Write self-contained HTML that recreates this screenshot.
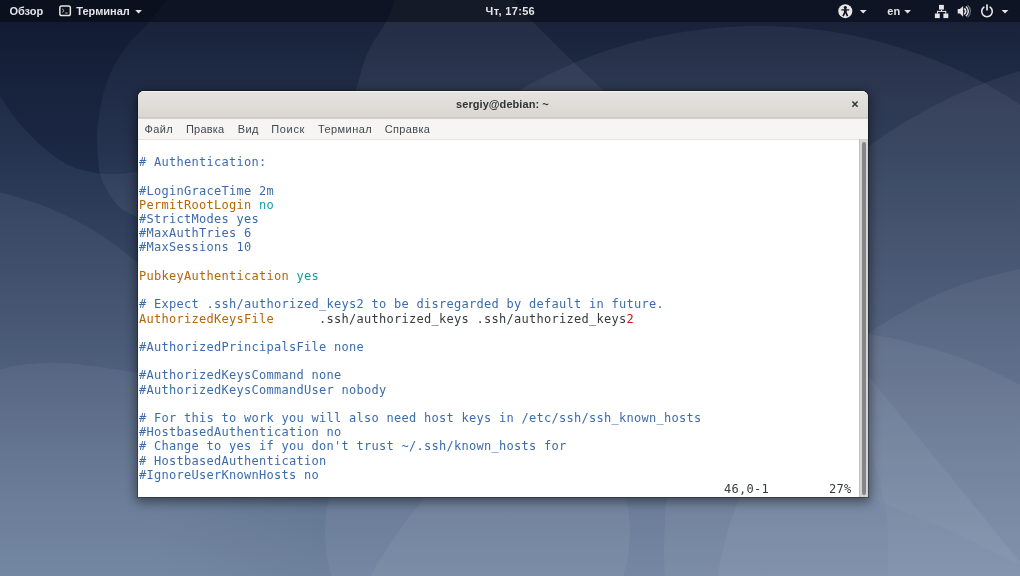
<!DOCTYPE html>
<html lang="ru"><head><meta charset="utf-8"><title>sergiy@debian: ~</title>
<style>
html,body{margin:0;padding:0}
body{width:1020px;height:576px;overflow:hidden;position:relative;background:#4a5878;font-family:"Liberation Sans",sans-serif}
#bg{position:absolute;left:0;top:0;width:1020px;height:576px}
#topbar{will-change:transform;position:absolute;left:0;top:0;width:1020px;height:22px;background:rgba(4,6,12,.5);color:#e6e6e6;font:bold 11px "Liberation Sans",sans-serif}
#topbar svg{position:absolute}
#win{will-change:transform;position:absolute;left:138px;top:91px;width:730px;height:406px;border-radius:6px 6px 0 0;box-shadow:0 0 0 1px rgba(0,0,0,.28),0 3px 11px 2px rgba(0,0,0,.45);background:#fff;overflow:hidden}
#title{position:absolute;left:0;top:0;width:730px;height:27px;background:linear-gradient(#e6e3e0,#dad7d2);border-bottom:1px solid #cdc9c4;box-sizing:border-box;box-shadow:inset 0 1px rgba(255,255,255,.6)}
#menu{position:absolute;left:0;top:27px;width:730px;height:22px;background:#f6f5f4;border-bottom:1px solid #e4e2df;box-sizing:border-box;box-shadow:inset 0 1px #d6d3ce;font:11px "Liberation Sans",sans-serif;color:#4a4f50}
#term{position:absolute;left:1px;top:50px;width:720px;height:357px;background:#fff;font:12px "DejaVu Sans Mono","Liberation Mono",monospace;letter-spacing:0.2754px;color:#2e3436;will-change:transform}
.ln{position:absolute;left:0;height:14.25px;line-height:14.25px;white-space:pre}
.c{color:#3c6cab}.k{color:#b5650a}.y{color:#129c9e}.r{color:#d01010}.n{color:#363b3d}
#sb{position:absolute;left:721px;top:48px;width:9px;height:358px;background:#d6d4d1;border-left:1px solid #c4c1bd;box-sizing:border-box}
#sb i{position:absolute;left:2px;top:3px;width:4px;height:352.5px;border-radius:2px;background:#82868a}
</style></head><body>
<svg id="bg" viewBox="0 0 1020 576">
<defs>
<linearGradient id="g" x1="0" y1="0" x2="0" y2="1"><stop offset="0.0382" stop-color="#19223a"/><stop offset="0.0868" stop-color="#1b263f"/><stop offset="0.1736" stop-color="#212d48"/><stop offset="0.2604" stop-color="#25334f"/><stop offset="0.3472" stop-color="#2c3c58"/><stop offset="0.4340" stop-color="#334360"/><stop offset="0.5208" stop-color="#3a4b68"/><stop offset="0.6076" stop-color="#415371"/><stop offset="0.6944" stop-color="#4a5c79"/><stop offset="0.7812" stop-color="#536683"/><stop offset="0.8681" stop-color="#5b6f8c"/><stop offset="1.0000" stop-color="#667b97"/></linearGradient>
<linearGradient id="gi" gradientUnits="userSpaceOnUse" x1="0" y1="0" x2="1020" y2="0"><stop offset="0" stop-color="#e6eeff" stop-opacity="0.058"/><stop offset="0.147" stop-color="#e6eeff" stop-opacity="0.058"/><stop offset="0.320" stop-color="#e6eeff" stop-opacity="0"/></linearGradient>
</defs>
<rect width="1020" height="576" fill="url(#g)"/>
<path d="M177.0 -12.0C175.3 -10.0 171.4 -5.6 166.8 0.0 C162.2 5.6 155.2 15.0 149.4 21.7 C143.6 28.4 137.3 33.6 132.0 40.0 C126.7 46.4 121.3 53.3 117.3 60.0 C113.3 66.7 110.3 73.3 107.8 80.0 C105.2 86.7 103.8 91.3 102.0 100.0 C100.2 108.7 97.8 121.1 97.2 132.0 C96.6 142.9 98.1 158.6 98.6 165.5 C99.1 172.4 99.8 172.1 100.0 173.4 C99.5 173.4 102.1 174.6 97.0 173.3 C91.9 172.0 78.6 170.2 69.4 165.6 C60.2 161.0 50.5 153.7 41.7 146.0 C32.9 138.3 23.6 128.0 16.7 119.7 C9.8 111.4 4.8 103.3 0.0 96.0 C-4.8 88.7 -10.0 79.3 -12.0 76.0L-12.0 -12.0Z" fill="#000820" fill-opacity="0.25"/>
<path d="M-30.0 187.2C-26.3 187.8 -15.1 189.4 -7.8 190.9 C-0.4 192.4 6.9 194.1 14.1 196.2 C21.3 198.2 28.5 200.5 35.6 203.0 C42.6 205.5 49.6 208.3 56.5 211.3 C63.3 214.3 70.1 217.6 76.8 221.1 C83.4 224.6 89.9 228.4 96.3 232.3 C102.6 236.3 108.9 240.5 115.0 244.9 C121.0 249.3 127.0 253.9 132.7 258.8 C138.4 263.6 144.0 268.6 149.4 273.9 C154.8 279.1 162.4 287.4 165.0 290.1L165 490L340 490L340 600L-30 600Z" fill="url(#gi)"/>
<g fill="#e6eeff" fill-opacity="0.058">
<path d="M100.0 173.4C100.9 175.8 102.4 182.2 105.6 187.8 C108.8 193.4 113.8 202.0 119.4 207.0 C125.0 212.0 133.1 215.3 139.0 218.0 C144.9 220.7 152.3 222.2 155.0 223.0L155.0 168.0C152.5 168.5 145.9 170.0 140.0 171.0 C134.1 172.0 126.1 173.5 119.4 173.9 C112.7 174.3 103.2 173.5 100.0 173.4Z"/>
<path d="M401.0 -12.0C400.0 -10.0 397.5 -5.7 395.0 0.0 C392.5 5.7 390.4 13.3 385.9 22.0 C381.4 30.7 372.9 41.1 368.0 52.0 C363.1 62.9 359.2 79.3 356.5 87.6 C353.8 95.9 352.8 99.6 352.0 102.0L610.0 110.0L610.0 100.0C608.4 98.0 606.6 94.2 600.6 88.0 C594.6 81.8 585.3 73.6 574.0 62.6 C562.7 51.6 543.0 32.4 533.0 22.0 C523.0 11.6 518.7 5.7 514.0 0.0 C509.3 -5.7 506.5 -10.0 505.0 -12.0Z"/>
<path d="M-30.0 376.0C-25.0 374.9 -7.9 371.2 0.0 369.5 C7.9 367.8 10.2 366.6 17.4 365.5 C24.6 364.4 34.7 363.2 43.4 362.9 C52.1 362.5 60.8 362.8 69.5 363.4 C78.2 364.0 86.8 365.4 95.5 366.6 C104.2 367.8 114.7 369.3 121.6 370.4 C128.5 371.5 130.6 371.7 137.0 373.0 C143.4 374.3 156.2 377.2 160.0 378.0L504.5 99.1C509.6 96.2 524.9 86.8 535.5 81.2 C546.0 75.7 556.8 70.5 567.7 65.7 C578.6 60.9 589.8 56.6 601.0 52.6 C612.3 48.7 623.7 45.2 635.2 42.1 C646.8 39.0 658.4 36.4 670.2 34.2 C681.9 32.0 693.7 30.2 705.6 28.9 C717.4 27.6 729.3 26.7 741.3 26.3 C753.2 25.9 765.1 25.9 777.1 26.4 C789.0 26.9 800.9 27.8 812.8 29.2 C824.6 30.5 836.4 32.4 848.1 34.6 C859.8 36.9 871.5 39.6 883.0 42.7 C894.5 45.8 905.9 49.4 917.2 53.4 C928.4 57.4 939.5 61.8 950.4 66.6 C961.3 71.4 972.1 76.7 982.6 82.3 C993.1 87.9 1003.4 94.0 1013.5 100.4 C1023.6 106.8 1038.1 117.3 1043.0 120.7L1045.0 620.0L-30.0 620.0Z"/>
<circle cx="1163" cy="549" r="499"/>
<circle cx="1088" cy="639" r="376"/>
<circle cx="793" cy="812" r="484"/>
<circle cx="477.5" cy="532" r="152.5"/>
<path d="M862.0 420.0C863.2 424.3 865.0 431.0 869.0 446.0 C873.0 461.0 882.8 488.3 886.0 510.0 C889.2 531.7 887.7 561.0 888.0 576.0 C888.3 591.0 888.0 596.0 888.0 600.0L1040 600L1040 586L860 366Z" fill-opacity="0.038"/>
<path d="M860 366L1025 568L953.6 532L860 494Z" fill-opacity="0.029"/>
</g>
</svg>
<div id="topbar">
<svg width="1020" height="22" viewBox="0 0 1020 22" style="left:0;top:0">
<g fill="#e4e4e4" font-family="Liberation Sans, sans-serif" font-weight="bold" font-size="11px">
<text x="9.4" y="15.4">Обзор</text>
<text x="76.3" y="15.4">Терминал</text>
<text x="485.6" y="15.4" letter-spacing="0.32">Чт, 17:56</text>
<text x="887.3" y="15.4">en</text>
<path d="M135.2 10 h6.8 l-3.4 3.6z"/>
<path d="M859.8 10 h6.8 l-3.4 3.6z"/>
<path d="M904.2 10 h6.8 l-3.4 3.6z"/>
<path d="M1001.6 10 h6.8 l-3.4 3.6z"/>
</g>
<!-- terminal app icon -->
<rect x="59.85" y="5.9" width="10.5" height="9.7" rx="1.8" fill="none" stroke="#e4e4e4" stroke-width="1.5"/>
<path d="M62.2 8.8 L64.1 10.6 L62.2 12.4" fill="none" stroke="#d0d0d0" stroke-width="0.9"/>
<path d="M65.2 13 H67.6" stroke="#d0d0d0" stroke-width="0.9"/>
<!-- accessibility -->
<circle cx="845.3" cy="11.15" r="7" fill="#e8e8e8"/>
<g fill="#10131f" stroke="none">
<circle cx="845.3" cy="7.6" r="1.6"/>
<rect x="841.2" y="9.2" width="8.2" height="1.4" rx="0.5"/>
<path d="M843.9 9.6 h2.8 v2.7 l1.6 3.5 l-1.5 0.6 l-1.5 -3.2 l-1.5 3.2 l-1.5 -0.6 l1.6 -3.5z"/>
</g>
<!-- network -->
<g fill="#e4e4e4">
<rect x="939" y="4.9" width="4.9" height="4.7"/>
<rect x="934.9" y="13.5" width="4.9" height="4.6"/>
<rect x="943.4" y="13.5" width="4.9" height="4.6"/>
<rect x="941" y="9.6" width="1" height="2"/>
<rect x="937" y="10.9" width="9.2" height="1"/>
<rect x="937" y="10.9" width="1" height="2.7"/>
<rect x="945.2" y="10.9" width="1" height="2.7"/>
</g>
<!-- volume -->
<path d="M957.7 9.1 h2.2 l3.2 -3.2 v10.8 l-3.2 -3.2 h-2.2z" fill="#e4e4e4"/>
<path d="M964.2 8.4 a3.6 3.6 0 0 1 0 5.8" fill="none" stroke="#e4e4e4" stroke-width="1.7"/>
<path d="M965.9 6.5 a6 6 0 0 1 0 9.6" fill="none" stroke="#e4e4e4" stroke-width="1.5"/>
<path d="M967.6 5.2 a8 8 0 0 1 0 12.2" fill="none" stroke="#6a6f78" stroke-width="1.2"/>
<!-- power -->
<path d="M983.9 7.1 a5.3 5.3 0 1 0 6.2 0" fill="none" stroke="#e4e4e4" stroke-width="1.6" stroke-linecap="round"/>
<rect x="986.15" y="4.2" width="1.7" height="6.4" rx="0.6" fill="#e4e4e4"/>
</svg>
</div>
<div id="win">
<div id="title"></div>
<div id="menu"></div>
<svg width="730" height="50" viewBox="0 0 730 50" style="position:absolute;left:0;top:0">
<text x="364.4" y="17.2" text-anchor="middle" font-family="Liberation Sans, sans-serif" font-weight="bold" font-size="11px" fill="#2e3436" letter-spacing="0.06">sergiy@debian: ~</text>
<path d="M714.4 10.5 L719.6 15.7 M719.6 10.5 L714.4 15.7" stroke="#2e3436" stroke-width="1.5" fill="none"/>
<g font-family="Liberation Sans, sans-serif" font-size="11px" fill="#43484a">
<text x="6.4" y="42.3" letter-spacing="0.4">Файл</text>
<text x="48" y="42.3" letter-spacing="0.2">Правка</text>
<text x="99.8" y="42.3" letter-spacing="0.3">Вид</text>
<text x="133.3" y="42.3" letter-spacing="0.65">Поиск</text>
<text x="180" y="42.3" letter-spacing="0.42">Терминал</text>
<text x="246.8" y="42.3" letter-spacing="0.32">Справка</text>
</g>
</svg>
<div id="term">
<div class="ln" style="top:0.00px"></div>
<div class="ln" style="top:14.21px"><span class="c"># Authentication:</span></div>
<div class="ln" style="top:28.42px"></div>
<div class="ln" style="top:42.63px"><span class="c">#LoginGraceTime 2m</span></div>
<div class="ln" style="top:56.84px"><span class="k">PermitRootLogin</span><span class="n"> </span><span class="y">no</span></div>
<div class="ln" style="top:71.05px"><span class="c">#StrictModes yes</span></div>
<div class="ln" style="top:85.26px"><span class="c">#MaxAuthTries 6</span></div>
<div class="ln" style="top:99.47px"><span class="c">#MaxSessions 10</span></div>
<div class="ln" style="top:113.68px"></div>
<div class="ln" style="top:127.89px"><span class="k">PubkeyAuthentication</span><span class="n"> </span><span class="y">yes</span></div>
<div class="ln" style="top:142.10px"></div>
<div class="ln" style="top:156.31px"><span class="c"># Expect .ssh/authorized_keys2 to be disregarded by default in future.</span></div>
<div class="ln" style="top:170.52px"><span class="k">AuthorizedKeysFile</span><span class="n">      .ssh/authorized_keys .ssh/authorized_keys</span><span class="r">2</span></div>
<div class="ln" style="top:184.73px"></div>
<div class="ln" style="top:198.94px"><span class="c">#AuthorizedPrincipalsFile none</span></div>
<div class="ln" style="top:213.15px"></div>
<div class="ln" style="top:227.36px"><span class="c">#AuthorizedKeysCommand none</span></div>
<div class="ln" style="top:241.57px"><span class="c">#AuthorizedKeysCommandUser nobody</span></div>
<div class="ln" style="top:255.78px"></div>
<div class="ln" style="top:269.99px"><span class="c"># For this to work you will also need host keys in /etc/ssh/ssh_known_hosts</span></div>
<div class="ln" style="top:284.20px"><span class="c">#HostbasedAuthentication no</span></div>
<div class="ln" style="top:298.41px"><span class="c"># Change to yes if you don't trust ~/.ssh/known_hosts for</span></div>
<div class="ln" style="top:312.62px"><span class="c"># HostbasedAuthentication</span></div>
<div class="ln" style="top:326.83px"><span class="c">#IgnoreUserKnownHosts no</span></div>
<div class="ln" style="top:341.04px"><span class="n">                                                                              46,0-1        27%</span></div>
</div>
<div id="sb"><i></i></div>
</div>
</body></html>
